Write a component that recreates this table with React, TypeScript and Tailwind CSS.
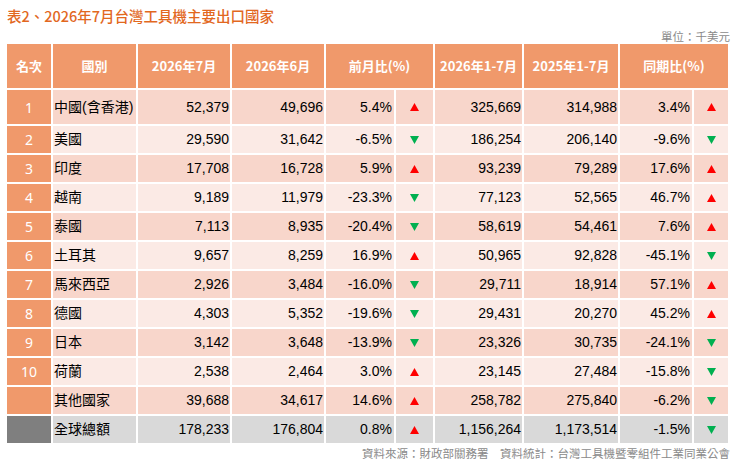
import React from "react";

type Row = {
  rank: string;
  name: string;
  m7: string;
  m6: string;
  mom: string;
  momUp: boolean;
  y26: string;
  y25: string;
  yoy: string;
  yoyUp: boolean;
};

const rows: Row[] = [
  { rank: "1", name: "中國(含香港)", m7: "52,379", m6: "49,696", mom: "5.4%", momUp: true, y26: "325,669", y25: "314,988", yoy: "3.4%", yoyUp: true },
  { rank: "2", name: "美國", m7: "29,590", m6: "31,642", mom: "-6.5%", momUp: false, y26: "186,254", y25: "206,140", yoy: "-9.6%", yoyUp: false },
  { rank: "3", name: "印度", m7: "17,708", m6: "16,728", mom: "5.9%", momUp: true, y26: "93,239", y25: "79,289", yoy: "17.6%", yoyUp: true },
  { rank: "4", name: "越南", m7: "9,189", m6: "11,979", mom: "-23.3%", momUp: false, y26: "77,123", y25: "52,565", yoy: "46.7%", yoyUp: true },
  { rank: "5", name: "泰國", m7: "7,113", m6: "8,935", mom: "-20.4%", momUp: false, y26: "58,619", y25: "54,461", yoy: "7.6%", yoyUp: true },
  { rank: "6", name: "土耳其", m7: "9,657", m6: "8,259", mom: "16.9%", momUp: true, y26: "50,965", y25: "92,828", yoy: "-45.1%", yoyUp: false },
  { rank: "7", name: "馬來西亞", m7: "2,926", m6: "3,484", mom: "-16.0%", momUp: false, y26: "29,711", y25: "18,914", yoy: "57.1%", yoyUp: true },
  { rank: "8", name: "德國", m7: "4,303", m6: "5,352", mom: "-19.6%", momUp: false, y26: "29,431", y25: "20,270", yoy: "45.2%", yoyUp: true },
  { rank: "9", name: "日本", m7: "3,142", m6: "3,648", mom: "-13.9%", momUp: false, y26: "23,326", y25: "30,735", yoy: "-24.1%", yoyUp: false },
  { rank: "10", name: "荷蘭", m7: "2,538", m6: "2,464", mom: "3.0%", momUp: true, y26: "23,145", y25: "27,484", yoy: "-15.8%", yoyUp: false },
  { rank: "", name: "其他國家", m7: "39,688", m6: "34,617", mom: "14.6%", momUp: true, y26: "258,782", y25: "275,840", yoy: "-6.2%", yoyUp: false },
  { rank: "", name: "全球總額", m7: "178,233", m6: "176,804", mom: "0.8%", momUp: true, y26: "1,156,264", y25: "1,173,514", yoy: "-1.5%", yoyUp: false },
];

function Arrow({ up }: { up: boolean }) {
  return up ? (
    <svg width="9" height="8" viewBox="0 0 9 8">
      <polygon points="4.5,0 9,8 0,8" fill="#ff0000" />
    </svg>
  ) : (
    <svg width="9" height="8" viewBox="0 0 9 8">
      <polygon points="0,0 9,0 4.5,8" fill="#00b050" />
    </svg>
  );
}

const numFont = { fontFamily: '"Liberation Sans", "Noto Sans CJK TC", sans-serif' };

export default function App() {
  return (
    <div className="w-[734px] h-[462px] bg-white pl-[7px] pt-[7px] overflow-hidden">
      <div
        className="text-[14.5px] leading-[18px] font-medium text-[#e2681f]"
        style={{ fontFamily: '"Noto Sans CJK TC", sans-serif' }}
      >
        表2、2026年7月台灣工具機主要出口國家
      </div>
      <div
        className="mt-[3px] w-[723px] h-[16px] text-right text-[11.5px] leading-[16px] text-[#8a8a8a]"
        style={{ fontFamily: '"Noto Sans CJK TC", sans-serif' }}
      >
        單位：千美元
      </div>
      <div
        className="grid w-[723px] gap-[2px] bg-white grid-cols-[44px_83px_92px_92px_68px_37px_87px_94px_72px_34px] grid-rows-[44px_34px_repeat(11,27px)] text-[14px] text-black"
        style={numFont}
      >
        {/* header */}
        {[
          { t: "名次", span: "" },
          { t: "國別", span: "" },
          { t: "2026年7月", span: "" },
          { t: "2026年6月", span: "" },
          { t: "前月比(%)", span: "col-span-2" },
          { t: "2026年1-7月", span: "" },
          { t: "2025年1-7月", span: "" },
          { t: "同期比(%)", span: "col-span-2" },
        ].map((h, i) => (
          <div
            key={i}
            className={`${h.span} bg-[#f0996b] flex items-center justify-center text-white text-[13px] font-bold`}
            style={{ fontFamily: '"Noto Sans CJK TC", sans-serif' }}
          >
            {h.t}
          </div>
        ))}
        {rows.map((r, i) => {
          const isTotal = i === rows.length - 1;
          const bg = isTotal ? "bg-[#d9d9d9]" : i % 2 === 0 ? "bg-[#f8d6cb]" : "bg-[#fbeae5]";
          const rankBg = isTotal ? "bg-[#7f7f7f]" : "bg-[#f0996b]";
          return (
            <React.Fragment key={i}>
              <div
                className={`${rankBg} flex items-center justify-center text-white text-[14px]`}
                style={{ fontFamily: '"Noto Sans", sans-serif' }}
              >
                {r.rank}
              </div>
              <div className={`${bg} flex items-center pl-[1px]`}>{r.name}</div>
              <div className={`${bg} flex items-center justify-end pr-[1px]`}>{r.m7}</div>
              <div className={`${bg} flex items-center justify-end pr-[1px]`}>{r.m6}</div>
              <div className={`${bg} flex items-center justify-end pr-[2px]`}>{r.mom}</div>
              <div className={`${bg} flex items-center justify-center`}>
                <Arrow up={r.momUp} />
              </div>
              <div className={`${bg} flex items-center justify-end pr-[1px]`}>{r.y26}</div>
              <div className={`${bg} flex items-center justify-end pr-[1px]`}>{r.y25}</div>
              <div className={`${bg} flex items-center justify-end pr-[2px]`}>{r.yoy}</div>
              <div className={`${bg} flex items-center justify-center`}>
                <Arrow up={r.yoyUp} />
              </div>
            </React.Fragment>
          );
        })}
      </div>
      <div
        className="mt-[2px] w-[723px] text-right text-[11.5px] leading-[16px] text-[#8a8a8a]"
        style={{ fontFamily: '"Noto Sans CJK TC", sans-serif' }}
      >
        資料來源：財政部關務署　資料統計：台灣工具機暨零組件工業同業公會
      </div>
    </div>
  );
}
